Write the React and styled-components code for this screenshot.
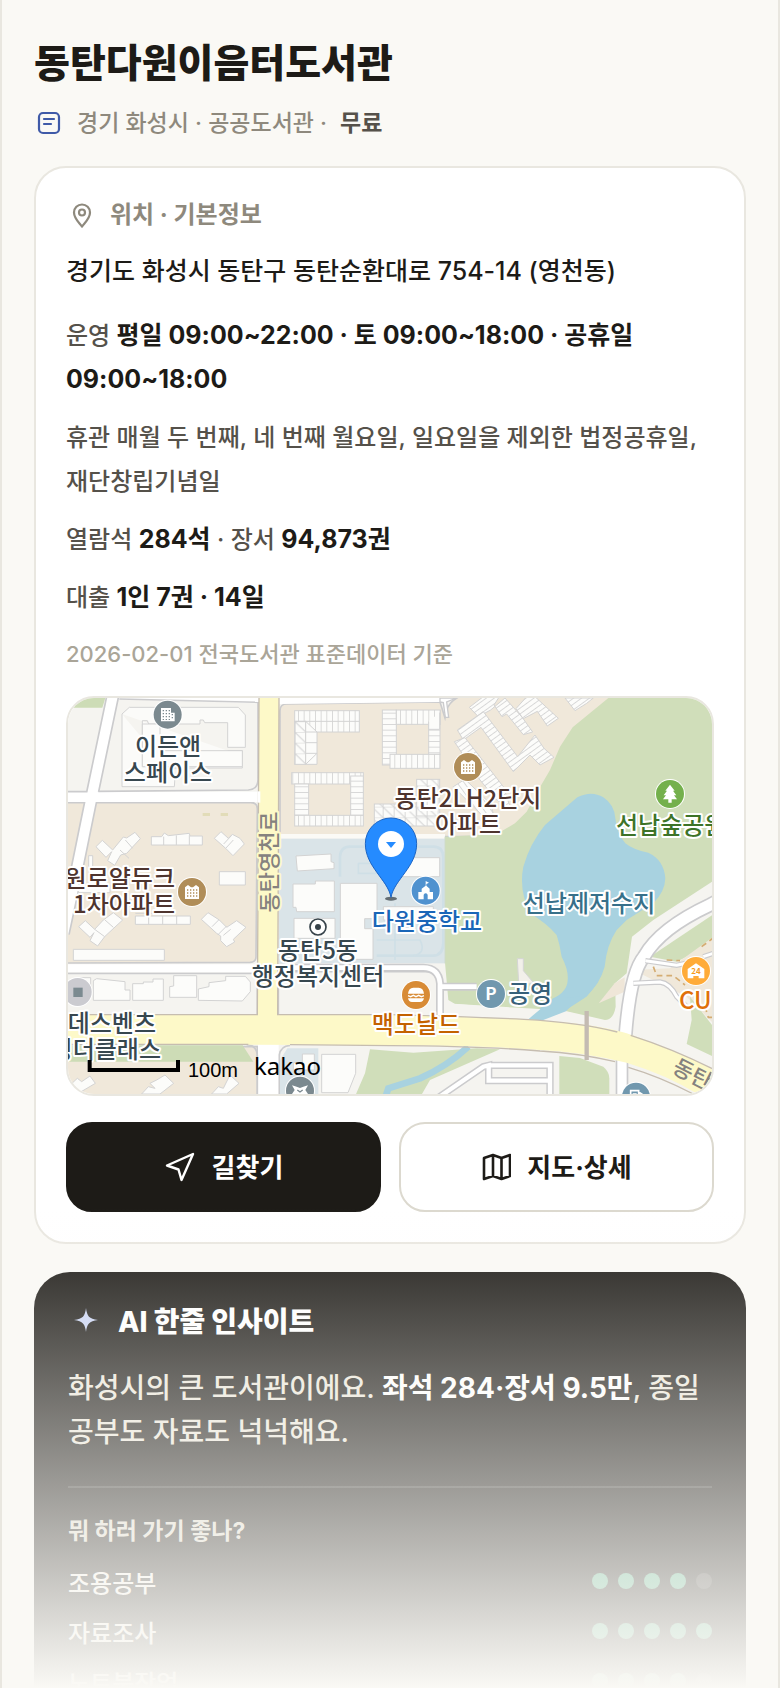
import React from "react";
import styled, { createGlobalStyle } from "styled-components";

const GlobalStyle = createGlobalStyle`
  *, *::before, *::after { box-sizing: border-box; }
  body {
    margin: 0;
    background: #faf9f5;
    color: #1d1b17;
    font-family: Inter, "Noto Sans CJK KR", sans-serif;
  }
  h1, h2, h3, p, ul { margin: 0; padding: 0; }
`;

const Page = styled.div`
  position: relative;
  height: 100vh;
  overflow: hidden;
  padding: 37px 32px 0;
  border: solid #e9e7e0;
  border-width: 0 2px;
`;

const Title = styled.h1`
  font-size: 39px;
  line-height: 52px;
  font-weight: 800;
`;

const Meta = styled.p`
  display: flex;
  align-items: center;
  gap: 13px;
  margin: 16px 0 25px;
  font-size: 23px;
  line-height: 36px;
  font-weight: 500;
  color: #8e897d;

  strong {
    font-weight: 700;
    color: #55514a;
  }
`;

const Icon = styled.svg`
  flex: none;
  width: ${(p) => p.$size}px;
  height: ${(p) => p.$size}px;
  fill: none;
  stroke: currentColor;
  stroke-linecap: round;
  stroke-linejoin: round;
`;

const InfoCard = styled.section`
  padding: 28px 30px 30px;
  border: 2px solid #e9e7e0;
  border-radius: 32px;
  background: #fff;
`;

const CardHeading = styled.h2`
  display: flex;
  align-items: center;
  gap: 14px;
  font-size: 24px;
  line-height: 38px;
  font-weight: 700;
  color: #8e897d;
`;

const Address = styled.p`
  margin: 17px 0 23px;
  font-size: 25px;
  line-height: 40px;
  font-weight: 500;
`;

const Facts = styled.div`
  display: flex;
  flex-direction: column;
  gap: 14px;
`;

const Fact = styled.p`
  font-size: 24px;
  line-height: 44px;
  font-weight: 500;
  color: #55514a;

  strong {
    font-size: 25px;
    line-height: 36px;
    font-weight: 700;
    color: #1d1b17;
  }
`;

const Source = styled.p`
  margin: 16px 0 24px;
  font-size: 22px;
  line-height: 36px;
  font-weight: 500;
  color: #aaa598;
`;

const MapFrame = styled.div`
  height: 400px;
  border: 2px solid #e9e7e0;
  border-radius: 28px;
  overflow: hidden;
`;

const MapCanvas = styled.svg`
  display: block;
  width: 100%;
  height: 100%;
`;

const Label = styled.text`
  font-family: "Noto Sans CJK KR", sans-serif;
  font-size: 24px;
  font-weight: 500;
  fill: ${(p) => p.$color};
  stroke: #fff;
  stroke-width: 4px;
  stroke-linejoin: round;
  paint-order: stroke;
`;

const RoadLabel = styled(Label)`
  font-size: 22px;
  stroke: #fdf9c8;
`;

const ScaleText = styled.text`
  font-family: "Liberation Sans", sans-serif;
  font-size: 20px;
`;

const BrandText = styled.text`
  font-family: "Noto Sans", sans-serif;
  font-size: 24px;
`;

const Badge = styled.text`
  font-family: "Noto Sans CJK KR", sans-serif;
  font-size: ${(p) => p.$size}px;
  font-weight: 700;
  text-anchor: middle;
  fill: ${(p) => p.$color};
`;

const Actions = styled.div`
  display: grid;
  grid-template-columns: 1fr 1fr;
  gap: 18px;
  margin-top: 26px;
`;

const Action = styled.button`
  display: flex;
  align-items: center;
  justify-content: center;
  gap: 16px;
  height: 90px;
  padding: 0;
  border: 2px solid ${(p) => (p.$primary ? "#1d1b17" : "#dcd9cf")};
  border-radius: 26px;
  background: ${(p) => (p.$primary ? "#1d1b17" : "#fff")};
  color: ${(p) => (p.$primary ? "#fff" : "#1d1b17")};
  font-family: inherit;
  font-size: 26px;
  font-weight: 700;
  cursor: pointer;
`;

const ActionLabel = styled.span`
  padding-bottom: 4px;
`;

const InsightCard = styled.section`
  margin-top: 28px;
  padding: 32px 34px 40px;
  border-radius: 36px;
  background: #1d1b17;
  color: #f7f5ef;
`;

const InsightHeading = styled.h2`
  display: flex;
  align-items: center;
  gap: 14px;
  font-size: 28px;
  line-height: 36px;
  font-weight: 800;
  color: #fff;

  svg {
    color: #c9d4f4;
  }
`;

const Summary = styled.p`
  margin: 26px 0 32px;
  font-size: 28px;
  line-height: 44px;
  font-weight: 500;
  color: #ebe7db;

  strong {
    font-weight: 700;
    color: #fff;
  }
`;

const FitTitle = styled.h3`
  padding-top: 26px;
  border-top: 2px solid rgba(255, 255, 255, 0.14);
  margin-bottom: 8px;
  font-size: 23px;
  line-height: 34px;
  font-weight: 700;
  color: #dedacd;
`;

const FitRow = styled.li`
  display: flex;
  align-items: center;
  justify-content: space-between;
  height: 50px;
  font-size: 24px;
  font-weight: 500;
  list-style: none;
`;

const Dots = styled.span`
  display: flex;
  gap: 10px;
`;

const Dot = styled.i`
  width: 16px;
  height: 16px;
  border-radius: 50%;
  background: ${(p) => (p.$on ? "#54ae87" : "rgba(255, 255, 255, 0.16)")};
`;

const BottomFade = styled.div`
  position: absolute;
  inset: auto 0 0;
  height: 480px;
  background: linear-gradient(to bottom, rgba(250, 249, 245, 0), #faf9f5);
  pointer-events: none;
`;

const fits = [
  { name: "조용공부", score: 4 },
  { name: "자료조사", score: 5 },
  { name: "노트북작업", score: 4 },
];

function Poi({ x, y, color, r = 42, children }) {
  return (
    <g transform={`translate(${x} ${y})`}>
      <circle r={r + 3} fill="#fff" />
      <circle r={r} fill={color} />
      {children}
    </g>
  );
}

function Apartment() {
  return (
    <g>
      <path d="M-21 -14L-12 -21L-3 -14V-14L3 -14L12 -21L21 -14V21H-21Z" fill="#fff" />
      <path d="M-13 -8V17M-4 -8V17M5 -8V17M14 -8V17" stroke="#b08d58" strokeWidth="4" strokeDasharray="4 5" />
    </g>
  );
}

function Terrain() {
  return (
    <>
      <defs>
        <pattern id="v" width="17" height="80" patternUnits="userSpaceOnUse">
          <rect width="17" height="80" fill="#fcfcfa" />
          <path d="M1 0V80" stroke="#d3d3d3" strokeWidth="3" />
        </pattern>
        <pattern id="h" width="80" height="17" patternUnits="userSpaceOnUse">
          <rect width="80" height="17" fill="#fcfcfa" />
          <path d="M0 1H80" stroke="#d3d3d3" strokeWidth="3" />
        </pattern>
        <pattern id="dv" width="17" height="80" patternUnits="userSpaceOnUse" patternTransform="rotate(-36)">
          <rect width="17" height="80" fill="#fcfcfa" />
          <path d="M1 0V80" stroke="#d3d3d3" strokeWidth="3" />
        </pattern>
        <pattern id="dh" width="80" height="14" patternUnits="userSpaceOnUse" patternTransform="rotate(-36)">
          <rect width="80" height="14" fill="#fcfcfa" />
          <path d="M0 1H80" stroke="#d3d3d3" strokeWidth="3" />
        </pattern>
        <pattern id="x" width="33" height="32" patternUnits="userSpaceOnUse" x="704" y="62">
          <rect width="33" height="32" fill="#fcfcfa" />
          <path d="M0 0H33M1 0V32M0 0L33 32" stroke="#d3d3d3" strokeWidth="3" fill="none" />
        </pattern>
      </defs>

      <rect x="0" y="0" width="2000" height="1240" fill="#f5f4f0" />

      {/* residential blocks */}
      <g stroke="#cbcbcd" strokeWidth="5">
        <path d="M0 338H572Q592 338 592 356L588 800Q588 816 570 817L0 819Z" fill="#f0e8da" />
        <path d="M660 62Q660 42 680 42L1140 36L1155 84L1160 60Q1170 28 1220 10H1700V440H660Z" fill="#f0e8da" />
        <path d="M0 1070H592V1240H0Z" fill="#f0e8da" />
        <path d="M0 850L592 850V975H0Z" fill="#f5f4f0" />
        <path d="M655 845H1096Q1134 847 1138 890V980H655Z" fill="#f5f4f0" />
      </g>
      <path d="M160 10L600 10V40L178 27Z" fill="#fff" />
      <path d="M600 10H1180L1160 28L1140 36L660 42Z" fill="#fff" />
      <path d="M1140 36L1150 38L1156 82H1166L1160 36L1190 24H1140Z" fill="#fff" stroke="#cbcbcd" strokeWidth="4" />
      <path d="M178 27L596 37" stroke="#cbcbcd" strokeWidth="5" />
      <path d="M24 24H136L127 53H24Z" fill="#cddcb6" />

      {/* park and school */}
      <path d="M1650 20L1538 112L1500 170L1470 240L1435 300L1400 365L1365 400L1310 432L1155 440V818L1165 930L1185 942L1400 958L1560 970L1700 960L1980 700V20Z" fill="#d0deba" />
      <rect x="657" y="432" width="498" height="14" fill="#fbfaf6" />
      <rect x="657" y="446" width="498" height="374" fill="#dae4e8" />
      <g fill="none" stroke="#cfdfe6" strokeWidth="8">
        <path d="M840 560V500Q842 470 870 470H1120Q1148 470 1150 500V760Q1148 796 1120 797H950" />
        <path d="M895 520H1110M895 520V550H1140M1005 640V810M950 750H1080Q1100 790 1060 797" strokeWidth="5" />
      </g>
      <path d="M1155 440V820" stroke="#cfdccb" strokeWidth="3" />

      {/* reservoir and creek */}
      <path d="M1552 322Q1595 300 1630 322Q1664 345 1666 385Q1670 430 1696 460Q1720 480 1765 488Q1812 510 1816 565Q1815 605 1780 640L1700 690L1670 720Q1640 765 1634 830Q1620 880 1580 920L1518 964L1450 990L1392 992L1480 925Q1522 905 1523 870Q1526 840 1505 800Q1500 765 1490 735Q1460 700 1410 670Q1376 600 1390 530Q1410 460 1455 405Z" fill="#a8d2e0" />

      {/* south bank */}
      <path d="M1156 940L1400 955L1520 962L1630 985L1660 980V950L1665 880L1700 850L1716 740L1780 690L1980 560V1240H1156Z" fill="#f5f4f0" />
      <path d="M1514 962L1580 920L1622 870L1665 850L1667 950Q1660 990 1635 990Z" fill="#d0deba" />
      <path d="M1616 940L1664 880L1694 862V905Z" fill="#efe6d8" />
      <path d="M1400 992L1480 925L1560 920L1518 964L1450 990Z" fill="#a8d2e0" />
      <path d="M1770 800L1980 660V750L1850 815Z" fill="#d0deba" />
      <path d="M1720 840L1830 835L1960 740V1000L1880 920Z" fill="#f0e8da" />
      <path d="M1890 920L1960 1010V1100L1880 1062L1895 990Z" fill="#d0deba" />
      <path d="M1372 806H1390V842L1422 880H1376Z" fill="#f2f0ea" stroke="#d5d5d5" strokeWidth="3" />
      <path d="M1980 628L1950 645Q1800 715 1752 800Q1710 850 1696 1040" fill="none" stroke="#cbcbcd" strokeWidth="44" />
      <path d="M1980 628L1950 645Q1800 715 1752 800Q1710 850 1696 1040" fill="none" stroke="#fff" strokeWidth="34" />
      <path d="M1756 812L1850 826L1900 815M1720 880L1800 876Q1830 880 1850 920L1880 950M1960 790L1930 800" fill="none" stroke="#cbcbcd" strokeWidth="16" />
      <path d="M1756 812L1850 826L1900 815M1720 880L1800 876Q1830 880 1850 920L1880 950M1960 790L1930 800" fill="none" stroke="#fff" strokeWidth="9" />
      <path d="M1780 830L1790 857H1840L1875 885M1820 810L1860 812M1925 770L1965 740M1935 950L1945 982H1965" fill="none" stroke="#d4ac72" strokeWidth="5" strokeDasharray="17 12" />

      {/* local streets */}
      <path d="M162 0L95 320L40 590L10 730" fill="none" stroke="#cbcbcd" strokeWidth="40" />
      <rect x="0" y="305" width="594" height="31" fill="#fff" />
      <path d="M115 304L565 300Q593 298 594 270V36M24 305H86" fill="none" stroke="#cbcbcd" strokeWidth="5" />
      <path d="M162 0L95 320L40 590L10 730" fill="none" stroke="#fff" strokeWidth="30" />
      <path d="M0 823H594V847H0Z" fill="#fff" />
      <path d="M655 833H1090Q1136 834 1140 880V980M1142 890H1250" fill="none" stroke="#cbcbcd" strokeWidth="24" />
      <path d="M655 833H1090Q1136 834 1140 880V980M1142 890H1250" fill="none" stroke="#fff" strokeWidth="14" />

      {/* south side */}
      <path d="M24 1066H548L580 1115H24Z" fill="#cddcb6" />
      <rect x="594" y="1060" width="62" height="180" fill="#fff" />
      <path d="M592 1240V1095Q590 1066 560 1064M658 1240V1095Q662 1068 690 1066" fill="none" stroke="#cbcbcd" strokeWidth="5" />
      <path d="M682 1075H775V1240H660V1110Z" fill="#dae4e8" />
      <path d="M930 1078L1060 1088L1250 1075L1320 1078L1110 1170L1070 1240H876L915 1150Z" fill="#d0deba" />
      <path d="M1225 1070Q1160 1130 1080 1165L985 1195L970 1240" fill="none" stroke="#a8d2e0" strokeWidth="20" />
      <path d="M1498 1098L1560 1104L1630 1130Q1648 1145 1648 1165V1240H1498Z" fill="#d0deba" />
      <path d="M1110 1240L1270 1130L1286 1126V1172H1470V1240M1290 1126H1470V1180" fill="none" stroke="#cbcbcd" strokeWidth="22" />
      <path d="M1110 1240L1270 1130L1286 1126V1172H1470V1240M1290 1126H1470V1180" fill="none" stroke="#fff" strokeWidth="13" />
      <path d="M1686 1110V1240" stroke="#cbcbcd" strokeWidth="38" />
      <path d="M1686 1110V1240" stroke="#fff" strokeWidth="28" />

      {/* arterial roads */}
      <path d="M0 975H592V974L597 10H657L653 975H990Q1220 980 1392 988Q1600 1000 1700 1030Q1850 1080 1980 1150V1260Q1870 1170 1700 1118Q1560 1085 1440 1080Q1260 1066 990 1066L0 1062Z" fill="#fdf9c8" />
      <path d="M0 974H592L597 24M657 24L653 974H990Q1220 980 1392 988Q1560 997 1672 1026M1712 1036Q1850 1080 1980 1148M0 1063H565M690 1064L990 1067Q1260 1068 1440 1083Q1560 1090 1665 1115M1705 1132Q1800 1160 1900 1212" fill="none" stroke="#c6bdb0" strokeWidth="4" />
      <path d="M597 304V338" stroke="#fff" strokeWidth="8" />
      <path d="M1580 963V1110" stroke="#c4bbb2" strokeWidth="13" />
    </>
  );
}

function Buildings() {
  return (
    <g fill="#fcfcfa" stroke="#d3d3d3" strokeWidth="3">
      <path d="M186 72L208 52H535L556 75V172H503V98H434L430 90H420V102H266L262 92H247V230H280V234H547V182H503M186 72V290H343L345 262" fill="#fbfbf9" />
      <path d="M247 230H547V182H300V102H247Z" />
      {/* houses, north row */}
      <path d="M108 470L127 451L158 480L190 441L200 444L225 427L241 446L200 490L182 495L164 526L143 512L155 485L138 502Z" />
      <path d="M180 480L207 505M196 450L218 475" fill="none" />
      <path d="M274 440H305L313 429L325 437L388 430L390 438H427V465H274ZM311 440V465M349 436V465M388 436V465" />
      <path d="M463 445L483 425L505 445L517 433L540 445L553 462L519 497L497 475ZM491 462L515 436M497 475L520 450" />
      <path d="M478 545H556V585H478ZM86 497H98V530H86ZM55 585H150V608H55Z" />
      {/* houses, south row */}
      <path d="M56 710L76 692L104 718L130 690L160 668L188 690L150 725L134 740L113 768L90 752L102 728L90 742ZM104 718L134 740M135 690L160 712" />
      <path d="M226 678H391V703H226ZM266 678V703M308 678V703M350 678V703M226 670H308" />
      <path d="M424 688L444 668L478 690L500 712L530 692L558 712L520 748L524 756L500 770L482 752V738L470 730ZM456 710L476 690M474 734L500 708M490 736L512 718" />
      <path d="M40 778H313V811H40Z" />
      {/* shops */}
      <path d="M100 872L110 866L195 875V900H210V931H100ZM218 881H250V876H279V867H310V931H218ZM329 890L341 888V857H410V922H329ZM415 897L447 890V878L497 872V859H556L571 876V905L547 933L415 931ZM60 863H92V900H60Z" />
      {/* gardens in the south */}
      <path d="M36 1180L52 1165L65 1175L90 1158L106 1180L62 1206ZM245 1212L265 1190L285 1195L270 1180L290 1170L315 1155L341 1180L300 1212ZM455 1212L475 1190L490 1195L510 1155L537 1180L500 1212Z" />
      <path d="M785 1093H887V1150L864 1208H785ZM727 1092H763V1140H700V1118H727Z" />
      {/* school */}
      <path d="M708 498L813 492V515L822 518V536L712 543ZM699 582H766V573H823V665H710L708 652H699ZM702 685H825V745H702ZM841 580H951V686H914V716H939V808H841ZM990 503H1139V560H990ZM970 650H1120V690H970Z" />
      {/* row houses */}
      <rect x="704" y="62" width="194" height="64" fill="url(#v)" />
      <rect x="704" y="94" width="33" height="129" fill="url(#x)" />
      <path d="M737 94L771 126V223H737ZM737 126H771M737 158H771M737 190H771M737 223L771 190" />
      <path d="M704 94H898" />
      <rect x="695" y="248" width="215" height="34" fill="url(#v)" />
      <rect x="704" y="282" width="42" height="94" fill="url(#h)" />
      <rect x="872" y="258" width="38" height="119" fill="url(#h)" />
      <rect x="704" y="376" width="206" height="32" fill="url(#v)" />
      <rect x="967" y="60" width="42" height="165" fill="url(#h)" />
      <rect x="1009" y="60" width="132" height="43" fill="url(#v)" />
      <rect x="1106" y="103" width="34" height="90" fill="url(#h)" />
      <rect x="990" y="193" width="150" height="42" fill="url(#v)" />
      <path d="M1106 94V118H1139V68" fill="#fcfcfa" />
      <rect x="943" y="342" width="190" height="66" fill="url(#x)" />
      <rect x="1070" y="268" width="69" height="110" fill="url(#x)" />
      <path d="M1228 52L1270 20H1318L1302 45L1326 80L1340 72L1390 134L1418 126L1368 56L1400 20L1425 20L1495 85L1462 108L1432 64L1390 86L1335 24L1292 60L1255 80Z" fill="url(#dh)" />
      <path d="M1192 120L1270 65L1373 200L1425 135L1452 175L1482 202L1440 225L1410 195L1360 245L1263 112L1210 150Z" fill="url(#dh)" />
      <path d="M1183 155L1215 143L1330 290L1350 350L1310 330L1260 270Z" fill="url(#dh)" />
      <path d="M1180 290L1215 268L1290 340L1310 400L1270 380Z" fill="url(#dv)" />
      <path d="M1515 24L1545 62L1580 40L1600 24Z" fill="url(#dh)" />
      <path d="M428 369H450V378H428ZM482 369H504V378H482Z" fill="#e2dcb8" stroke="none" />
    </g>
  );
}

function Markers() {
  return (
    <>
      <Poi x={323} y={74} color="#7b898f">
        <path d="M-20 -20H10V-6H21V20H-20Z" fill="#fff" />
        <path d="M-13 -14V16M-4 -14V16M5 -14V16M14 -2V16" stroke="#7b898f" strokeWidth="4" strokeDasharray="4 5" />
      </Poi>
      <Poi x={396} y={606} color="#b08d58"><Apartment /></Poi>
      <Poi x={1224} y={231} color="#b08d58"><Apartment /></Poi>
      <Poi x={1830} y={312} color="#74b04c">
        <path d="M0 -28L14 -10H9L19 4H12L21 16H5V26H-5V16H-21L-12 4H-19L-9 -10H-14Z" fill="#fff" />
      </Poi>
      <Poi x={1097} y={602} color="#5092cf">
        <path d="M-22 26V4H-12V-6L0 -15V-29L10 -24L2 -20V-15L12 -6V4H22V26H6V12Q0 4 -6 12V26Z" fill="#fff" />
      </Poi>
      <Poi x={1068} y={915} color="#d88b36">
        <path d="M-24 -4Q-22 -22 -8 -22H8Q22 -22 24 -4ZM-24 10H24Q22 21 12 21H-12Q-22 21 -24 10Z" fill="#fff" />
        <path d="M-24 2L-16 5L-8 1L0 5L8 1L16 5L24 2" fill="none" stroke="#fff" strokeWidth="4" />
      </Poi>
      <Poi x={1293} y={912} color="#7198ae" />
      <Poi x={1908} y={843} color="#ffab38">
        <path d="M-25 -6L0 -23L25 -6V22H8V15H-8V22H-25Z" fill="#fff" />
      </Poi>
      <Poi x={53} y={906} color="#cbcbd0">
        <rect x="-13" y="-13" width="28" height="28" fill="#7b8a90" />
      </Poi>
      <Poi x={720} y={1202} color="#7b898f">
        <path d="M-24 -16L-10 -12L0 -8L10 -12L24 -16L16 -2L24 10H-24L-16 -2Z" fill="#fff" />
        <path d="M-8 -2L0 4L8 -2" fill="none" stroke="#7b898f" strokeWidth="4" />
      </Poi>
      <Poi x={1728} y={1220} color="#7198ae">
        <path d="M-16 20V-18H8V20M-10 -8H2M8 -14L20 -6V14" fill="none" stroke="#fff" strokeWidth="5" />
      </Poi>
      <circle cx="774" cy="711" r="27" fill="#fff" />
      <circle cx="774" cy="711" r="24" fill="#fff" stroke="#37434a" strokeWidth="5" />
      <circle cx="774" cy="711" r="9" fill="#37434a" />
      <ellipse cx="993" cy="626" rx="18" ry="6" fill="#3c454b" opacity="0.75" />
      <path d="M993 622C984 570 916 530 916 461A77 77 0 0 1 1070 461C1070 530 1002 570 993 622Z" fill="#258bff" stroke="#1b64c4" strokeWidth="3" />
      <circle cx="993" cy="462" r="39" fill="#fff" />
      <path d="M978 456H1008L993 474Z" fill="#258bff" />
      <path d="M89 1110V1140H354V1110" fill="none" stroke="#000" strokeWidth="12" />
    </>
  );
}

function LocationMap() {
  return (
    <MapFrame>
      <MapCanvas viewBox="0 0 644 396" preserveAspectRatio="xMidYMid slice" role="img" aria-label="동탄다원이음터도서관 지도">
        <g transform="scale(0.33333) translate(-24 -24)">
          <Terrain />
          <Buildings />
        </g>
        <RoadLabel $color="#85827f" textAnchor="middle" transform="translate(209 164) rotate(-90)">동탄영천로</RoadLabel>
        <RoadLabel $color="#85827f" transform="translate(603 374) rotate(27)">동탄순환대로</RoadLabel>
        <Label $color="#37474f" textAnchor="end" x="88" y="334">메르세데스벤츠</Label>
        <Label $color="#37474f" textAnchor="end" x="93" y="360">스타필딩더클래스</Label>
        <g transform="scale(0.33333) translate(-24 -24)">
          <Markers />
        </g>
        <Badge $size={17} $color="#fff" x="423" y="302">P</Badge>
        <Badge $size={8} $color="#f59a1c" x="628" y="276">24</Badge>
        <Label $color="#37474f" textAnchor="middle" x="100" y="57">이든앤</Label>
        <Label $color="#37474f" textAnchor="middle" x="100" y="83">스페이스</Label>
        <Label $color="#4e342e" textAnchor="end" x="107" y="189">원로얄듀크</Label>
        <Label $color="#4e342e" textAnchor="end" x="107" y="215">1차아파트</Label>
        <Label $color="#4e342e" textAnchor="middle" x="400" y="109">동탄2LH2단지</Label>
        <Label $color="#4e342e" textAnchor="middle" x="400" y="135">아파트</Label>
        <Label $color="#3d7328" x="548" y="136">선납숲공원</Label>
        <Label $color="#37708a" textAnchor="middle" x="521" y="214">선납제저수지</Label>
        <Label $color="#1a66b8" textAnchor="middle" x="359" y="232">다원중학교</Label>
        <Label $color="#37474f" textAnchor="middle" x="250" y="261">동탄5동</Label>
        <Label $color="#37474f" textAnchor="middle" x="250" y="287">행정복지센터</Label>
        <Label $color="#c46200" textAnchor="middle" x="348" y="335">맥도날드</Label>
        <Label $color="#37607a" x="440" y="304">공영</Label>
        <Label $color="#e0700a" x="611" y="311">CU</Label>
        <ScaleText x="120" y="379">100m</ScaleText>
        <BrandText x="186" y="377">kakao</BrandText>
      </MapCanvas>
    </MapFrame>
  );
}

export default function App() {
  return (
    <>
      <GlobalStyle />
      <Page>
        <Title>동탄다원이음터도서관</Title>
        <Meta>
          <Icon $size={30} viewBox="0 0 30 30" color="#3f5aa8" strokeWidth="2.2">
            <rect x="5" y="5" width="20" height="20" rx="4" />
            <path d="M10 11H20M10 16H17" />
          </Icon>
          <span>경기 화성시 · 공공도서관 ·</span>
          <strong>무료</strong>
        </Meta>

        <InfoCard>
          <CardHeading>
            <Icon $size={30} viewBox="0 0 30 30" strokeWidth="2.2">
              <path d="M16 26.500C13 22.500 8 18.500 8 12.500A8 8 0 0 1 24 12.500C24 18.500 19 22.500 16 26.500Z" />
              <circle cx="16" cy="12.500" r="3" />
            </Icon>
            위치 · 기본정보
          </CardHeading>
          <Address>경기도 화성시 동탄구 동탄순환대로 754-14 (영천동)</Address>
          <Facts>
            <Fact>운영 <strong>평일 09:00~22:00 · 토 09:00~18:00 · 공휴일 09:00~18:00</strong></Fact>
            <Fact>휴관 매월 두 번째, 네 번째 월요일, 일요일을 제외한 법정공휴일, 재단창립기념일</Fact>
            <Fact>열람석 <strong>284석</strong> · 장서 <strong>94,873권</strong></Fact>
            <Fact>대출 <strong>1인 7권 · 14일</strong></Fact>
          </Facts>
          <Source>2026-02-01 전국도서관 표준데이터 기준</Source>
          <LocationMap />
          <Actions>
            <Action type="button" $primary>
              <Icon $size={32} viewBox="0 0 32 32" strokeWidth="2.4">
                <path d="M29 3L17.500 29L14.500 18.500L3 14.500Z" />
              </Icon>
              <ActionLabel>길찾기</ActionLabel>
            </Action>
            <Action type="button">
              <Icon $size={30} viewBox="0 0 30 30" strokeWidth="2.600">
                <path d="M3 6L12 3L20.500 6L29 3V24L20.500 27L12 24L3 27ZM12 3V24M20.500 6V27" />
              </Icon>
              <ActionLabel>지도·상세</ActionLabel>
            </Action>
          </Actions>
        </InfoCard>

        <InsightCard>
          <InsightHeading>
            <Icon $size={36} viewBox="0 0 36 36" strokeWidth="0">
              <path d="M18 4C19 12 21 15 30 16C21 17 19 20 18 28C17 20 15 17 6 16C15 15 17 12 18 4Z" fill="currentColor" />
            </Icon>
            AI 한줄 인사이트
          </InsightHeading>
          <Summary>
            화성시의 큰 도서관이에요. <strong>좌석 284·장서 9.5만</strong>, 종일 공부도 자료도 넉넉해요.
          </Summary>
          <FitTitle>뭐 하러 가기 좋나?</FitTitle>
          <ul>
            {fits.map((fit) => (
              <FitRow key={fit.name}>
                {fit.name}
                <Dots role="img" aria-label={`5점 중 ${fit.score}점`}>
                  {[1, 2, 3, 4, 5].map((n) => (
                    <Dot key={n} $on={n <= fit.score} />
                  ))}
                </Dots>
              </FitRow>
            ))}
          </ul>
        </InsightCard>
        <BottomFade />
      </Page>
    </>
  );
}
